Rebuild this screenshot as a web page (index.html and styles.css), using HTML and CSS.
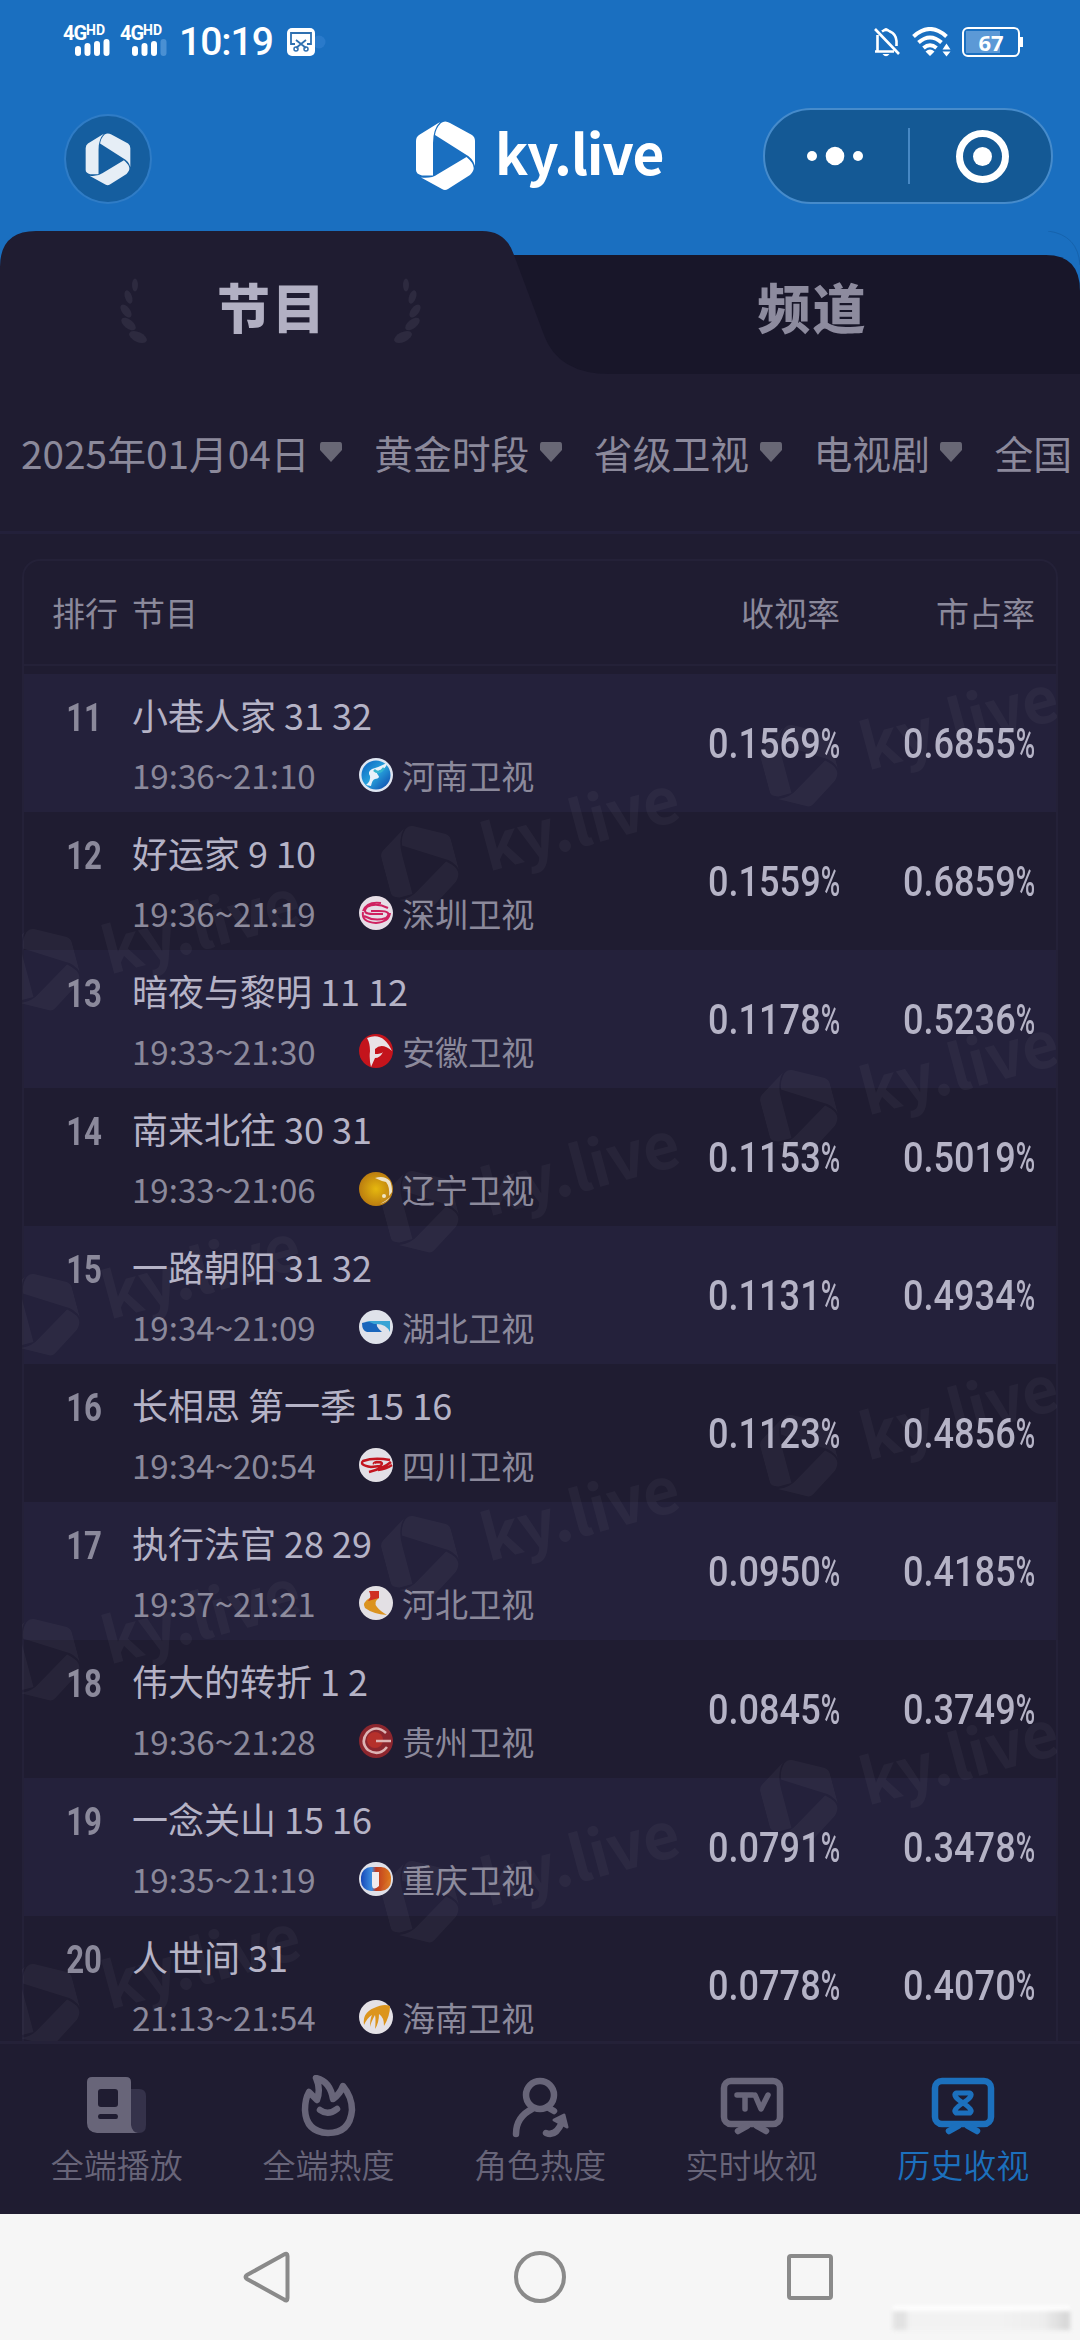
FILE: index.html
```html
<!DOCTYPE html>
<html lang="zh-CN">
<head>
    <meta charset="UTF-8">
    <meta name="viewport" content="width=device-width, initial-scale=1.0">
    <title>ky.live</title>
    <link rel="stylesheet" href="styles.css">
</head>
<body>
    <svg class="defs" width="0" height="0">
        <defs>
            <symbol id="logo" viewBox="0 0 59 70">
                <path d="M24 1 L3 14 Q0 16 0 20 V49 Q0 53 6 54.500 H17 V22 Q17 8 24 1Z"/>
                <path d="M25 2 Q29 -1 34 2 L56 14 Q59 16 59 20 V45 Q57 37 49 33 L19 14 Q20 7 25 2Z"/>
                <path d="M50.500 36 Q60 44 57 50 Q56 52 54 54 L32 68 Q29 70 26 68 L5 56.500 Q15 58 22 53Z"/>
            </symbol>
            <symbol id="laurel" viewBox="0 0 30 66">
                <ellipse cx="16" cy="7" rx="3" ry="6.500"/>
                <ellipse cx="9.500" cy="19" rx="3.500" ry="7" transform="rotate(-20 9.500 19)"/>
                <ellipse cx="7" cy="33" rx="4" ry="7.500" transform="rotate(-38 7 33)"/>
                <ellipse cx="9.500" cy="46" rx="4.500" ry="8.500" transform="rotate(-52 9.500 46)"/>
                <ellipse cx="19" cy="59" rx="5" ry="9.500" transform="rotate(-65 19 59)"/>
            </symbol>
            <symbol id="mark" viewBox="0 0 300 100" overflow="visible">
                <use href="#logo" x="-36" y="-43" width="72" height="86"/>
                <text x="64" y="22">ky.live</text>
            </symbol>
            <linearGradient id="blue" x1="0" x2="1" y1="0" y2="1">
                <stop offset="0" stop-color="#0b5fc0"/>
                <stop offset=".5" stop-color="#27a3dc"/>
                <stop offset="1" stop-color="#0a3fa8"/>
            </linearGradient>
            <radialGradient id="gold">
                <stop offset="0" stop-color="#e6b80e"/>
                <stop offset="1" stop-color="#bb7d10"/>
            </radialGradient>
            <linearGradient id="sunset" x1="0" x2="1">
                <stop offset="0" stop-color="#1748b8"/>
                <stop offset=".36" stop-color="#3d8fe0"/>
                <stop offset=".5" stop-color="#c03a22"/>
                <stop offset="1" stop-color="#dd7a1c"/>
            </linearGradient>
        </defs>
    </svg>

    <div class="top">
        <div class="statusbar">
            <div class="signal">
                <span class="net">4G<sup>HD</sup></span>
                <svg width="36" height="17"><path d="M3 10v4M12.500 7v7M22 5v9M31.500 3v11"/></svg>
            </div>
            <div class="signal">
                <span class="net">4G<sup>HD</sup></span>
                <svg width="36" height="17"><path d="M3 10v4M12.500 7v7M22 5v9"/><path class="weak" d="M31.500 3v11"/></svg>
            </div>
            <span class="time">10:19</span>
            <svg class="scissors" width="40" height="28" viewBox="0 0 40 28">
                <circle cx="32" cy="14" r="6.500" fill="#2a7aca"/>
                <rect width="28" height="28" rx="5" fill="#fff"/>
                <path d="M8 16H4V5h20v11h-4M9 12l10 8M19 12L9 20" fill="none" stroke="#2f70b0" stroke-width="1.800"/>
                <circle cx="9" cy="21" r="2" fill="none" stroke="#2f70b0" stroke-width="1.500"/>
                <circle cx="19" cy="21" r="2" fill="none" stroke="#2f70b0" stroke-width="1.500"/>
            </svg>
            <span class="spacer"></span>
            <svg class="bell" width="28" height="31" viewBox="0 0 28 31">
                <path d="M4.500 8v16M2 24.500h19M9 4.500Q13 1.500 17 4.500Q23 7 23.500 14v5M2 2l24 25" fill="none" stroke="#fff" stroke-width="2.600"/>
                <path d="M9.500 27h7q-3.500 4.500-7 0zM10 3q3-4 6 0z" fill="#fff"/>
            </svg>
            <svg class="wifi" width="40" height="30" viewBox="0 0 40 30">
                <path d="M1.500 9.500Q18-5.500 34.500 9.500M6.500 15.500Q18 5.500 29.500 15.500M11.500 21Q18 15.500 24.500 21" fill="none" stroke="#fff" stroke-width="4"/>
                <path d="M13.500 24.500q4.500-4 9 0L18 29zM30.500 22.500l4-6 4 6zM30.500 24.500h8l-4 5z" fill="#fff"/>
            </svg>
            <div class="battery"><span>67</span></div>
        </div>
        <div class="navbar">
            <div class="home"><svg width="46" height="53"><use href="#logo"/></svg></div>
            <div class="brand">
                <svg width="59" height="70"><use href="#logo"/></svg>
                <span>ky.live</span>
            </div>
            <div class="capsule">
                <svg width="144" height="92" viewBox="0 0 144 92">
                    <circle cx="47" cy="46" r="5"/><circle cx="70" cy="46" r="9.300"/><circle cx="93" cy="46" r="5"/>
                </svg>
                <svg class="target" width="144" height="92" viewBox="0 0 144 92">
                    <circle cx="73.500" cy="46.500" r="23" fill="none" stroke="#fff" stroke-width="7"/>
                    <circle cx="73.500" cy="46.500" r="9.500"/>
                </svg>
            </div>
        </div>
    </div>

    <div class="tabs">
        <svg class="tabs-bg" width="1080" height="143" viewBox="0 0 1080 143">
            <path d="M480 24H1046Q1080 24 1080 60V143H480Z" fill="#181629"/>
            <path d="M1048 0Q1078 4 1080 34" fill="none" stroke="#1663ad"/>
            <path d="M0 143V36Q0 0 36 0H482Q506 0 514 24L544 104Q558 143 610 143Z" fill="#1f1c31"/>
        </svg>
        <div class="tab active">
            <svg width="30" height="66"><use href="#laurel"/></svg>
            <span>节目</span>
            <svg class="flip" width="30" height="66"><use href="#laurel"/></svg>
        </div>
        <div class="tab"><span>频道</span></div>
    </div>

    <div class="filters">
        <div class="filter">2025年01月04日<svg width="22" height="20"><path d="M2 0H20Q22 0 22 3V8L11 20 0 8V3Q0 0 2 0Z"/></svg></div>
        <div class="filter">黄金时段<svg width="22" height="20"><path d="M2 0H20Q22 0 22 3V8L11 20 0 8V3Q0 0 2 0Z"/></svg></div>
        <div class="filter">省级卫视<svg width="22" height="20"><path d="M2 0H20Q22 0 22 3V8L11 20 0 8V3Q0 0 2 0Z"/></svg></div>
        <div class="filter">电视剧<svg width="22" height="20"><path d="M2 0H20Q22 0 22 3V8L11 20 0 8V3Q0 0 2 0Z"/></svg></div>
        <div class="filter">全国<svg width="22" height="20"><path d="M2 0H20Q22 0 22 3V8L11 20 0 8V3Q0 0 2 0Z"/></svg></div>
    </div>

    <div class="content">
        <div class="table">
            <div class="thead">
                <span class="rank">排行</span>
                <span class="program">节目</span>
                <span class="rate">收视率</span>
                <span class="share">市占率</span>
            </div>

            <div class="row">
                <span class="rank">11</span>
                <div class="program">
                    <div class="title">小巷人家 31 32</div>
                    <div class="meta"><span class="hours">19:36~21:10</span>
                        <svg width="34" height="34"><circle cx="17" cy="17" r="17" fill="#dfe6f2"/><circle cx="17" cy="17" r="14.500" fill="url(#blue)"/><path d="M7 27Q12 23 11 18Q8 14 13 11Q20 9 28 5Q27 11 21 12Q16 14 19 17Q22 20 16 21Q13 22 12 28Z" fill="#e8f2fa"/><path d="M15 12Q20 17 25 10" fill="none" stroke="#35b5cf" stroke-width="2.500"/></svg>河南卫视</div>
                </div>
                <span class="rate">0.1569<i>%</i></span>
                <span class="share">0.6855<i>%</i></span>
            </div>
            <div class="row">
                <span class="rank">12</span>
                <div class="program">
                    <div class="title">好运家 9 10</div>
                    <div class="meta"><span class="hours">19:36~21:19</span>
                        <svg width="34" height="34"><circle cx="17" cy="17" r="17" fill="#e6dde6"/><path d="M29 12Q17 6 8 11Q2 18 14 18H24M5 20Q16 26 27 22Q34 15 20 15H12M4 16Q2 26 17 27Q30 26 31 17M4 15Q8 5 22 7" fill="none" stroke="#cf2160" stroke-width="2"/></svg>深圳卫视</div>
                </div>
                <span class="rate">0.1559<i>%</i></span>
                <span class="share">0.6859<i>%</i></span>
            </div>
            <div class="row">
                <span class="rank">13</span>
                <div class="program">
                    <div class="title">暗夜与黎明 11 12</div>
                    <div class="meta"><span class="hours">19:33~21:30</span>
                        <svg width="34" height="34"><circle cx="17" cy="17" r="17" fill="#c4141c"/><path d="M8 4Q24-3 33 17Q23 8 16 15L16 20Q22 20 24 18Q21 24 16 24L12 33Q10 25 11 17Q11 9 8 4Z" fill="#e9e2e6"/></svg>安徽卫视</div>
                </div>
                <span class="rate">0.1178<i>%</i></span>
                <span class="share">0.5236<i>%</i></span>
            </div>
            <div class="row">
                <span class="rank">14</span>
                <div class="program">
                    <div class="title">南来北往 30 31</div>
                    <div class="meta"><span class="hours">19:33~21:06</span>
                        <svg width="34" height="34"><circle cx="17" cy="17" r="17" fill="url(#gold)"/><path d="M16 6Q25 3 31 9Q33 13 33 20L30 24Q31 15 27 10Q22 9 16 6Z" fill="#eee3c8"/><circle cx="25" cy="24" r="2" fill="#f0e5c4"/><path d="M21 32Q28 30 31 25Q27 29 21 32Z" fill="#f0e5c4"/></svg>辽宁卫视</div>
                </div>
                <span class="rate">0.1153<i>%</i></span>
                <span class="share">0.5019<i>%</i></span>
            </div>
            <div class="row">
                <span class="rank">15</span>
                <div class="program">
                    <div class="title">一路朝阳 31 32</div>
                    <div class="meta"><span class="hours">19:34~21:09</span>
                        <svg width="34" height="34"><circle cx="17" cy="17" r="17" fill="#dfe2ea"/><path d="M3 13Q11 10 19 13Q15 15 23 22H8Q3 21 3 13Z" fill="#1a66bc"/><path d="M6 11H31V22Q27 13 15 14Q9 11 6 11Z" fill="#39a4d5"/></svg>湖北卫视</div>
                </div>
                <span class="rate">0.1131<i>%</i></span>
                <span class="share">0.4934<i>%</i></span>
            </div>
            <div class="row">
                <span class="rank">16</span>
                <div class="program">
                    <div class="title">长相思 第一季 15 16</div>
                    <div class="meta"><span class="hours">19:34~20:54</span>
                        <svg width="34" height="34"><circle cx="17" cy="17" r="17" fill="#e2e0e6"/><path d="M31 12Q15 9 4 13Q0 17 12 19L21 18Q26 14 18 14Q14 15 15 16M32 14Q25 20 10 24M33 17Q27 21 19 22" fill="none" stroke="#c3151f" stroke-width="2.400"/></svg>四川卫视</div>
                </div>
                <span class="rate">0.1123<i>%</i></span>
                <span class="share">0.4856<i>%</i></span>
            </div>
            <div class="row">
                <span class="rank">17</span>
                <div class="program">
                    <div class="title">执行法官 28 29</div>
                    <div class="meta"><span class="hours">19:37~21:21</span>
                        <svg width="34" height="34"><circle cx="17" cy="17" r="17" fill="#e3e0e4"/><path d="M12 11L20 12Q14 16 18 21Q21 25 28 29Q14 28 6 22Q2 17 12 11Z" fill="#db9320"/><path d="M10 5H20V12L9 15Q13 11 10 5Z" fill="#cf3023"/></svg>河北卫视</div>
                </div>
                <span class="rate">0.0950<i>%</i></span>
                <span class="share">0.4185<i>%</i></span>
            </div>
            <div class="row">
                <span class="rank">18</span>
                <div class="program">
                    <div class="title">伟大的转折 1 2</div>
                    <div class="meta"><span class="hours">19:36~21:28</span>
                        <svg width="34" height="34"><circle cx="17" cy="17" r="17" fill="#8c262e"/><circle cx="16" cy="16" r="8" fill="#b5302b"/><path d="M27 9Q17 0 8 9Q1 18 9 26Q20 33 28 23M32 17H17" fill="none" stroke="#ddb4b4" stroke-width="2.600"/></svg>贵州卫视</div>
                </div>
                <span class="rate">0.0845<i>%</i></span>
                <span class="share">0.3749<i>%</i></span>
            </div>
            <div class="row">
                <span class="rank">19</span>
                <div class="program">
                    <div class="title">一念关山 15 16</div>
                    <div class="meta"><span class="hours">19:35~21:19</span>
                        <svg width="34" height="34"><circle cx="17" cy="17" r="17" fill="#dfe0e8"/><rect x="2" y="5" width="30" height="24" rx="10" fill="url(#sunset)"/><path d="M13 10H20V24Q13 30 13 22Z" fill="#f1ecee"/></svg>重庆卫视</div>
                </div>
                <span class="rate">0.0791<i>%</i></span>
                <span class="share">0.3478<i>%</i></span>
            </div>
            <div class="row">
                <span class="rank">20</span>
                <div class="program">
                    <div class="title">人世间 31</div>
                    <div class="meta"><span class="hours">21:13~21:54</span>
                        <svg width="34" height="34"><circle cx="17" cy="17" r="17" fill="#e4e1e6"/><path d="M5 25Q3 13 15 8Q25 3 31 6Q31 16 25 26Q25 17 20 14Q20 23 16 29Q17 20 16 15Q12 22 11 27Q11 19 13 15Q8 18 5 25Z" fill="#dc951d"/></svg>海南卫视</div>
                </div>
                <span class="rate">0.0778<i>%</i></span>
                <span class="share">0.4070<i>%</i></span>
            </div>

            <!-- repeated brand marks over the list -->
            <svg class="watermark" width="1035" height="1480" viewBox="22 561 1035 1480">
                <g transform="translate(800 766) rotate(-15)"><use href="#mark" width="300" height="100"/></g>
                <g transform="translate(800 1111) rotate(-15)"><use href="#mark" width="300" height="100"/></g>
                <g transform="translate(800 1456) rotate(-15)"><use href="#mark" width="300" height="100"/></g>
                <g transform="translate(800 1801) rotate(-15)"><use href="#mark" width="300" height="100"/></g>
                <g transform="translate(421 867) rotate(-15)"><use href="#mark" width="300" height="100"/></g>
                <g transform="translate(421 1212) rotate(-15)"><use href="#mark" width="300" height="100"/></g>
                <g transform="translate(421 1557) rotate(-15)"><use href="#mark" width="300" height="100"/></g>
                <g transform="translate(421 1902) rotate(-15)"><use href="#mark" width="300" height="100"/></g>
                <g transform="translate(42 970) rotate(-15)"><use href="#mark" width="300" height="100"/></g>
                <g transform="translate(42 1315) rotate(-15)"><use href="#mark" width="300" height="100"/></g>
                <g transform="translate(42 1660) rotate(-15)"><use href="#mark" width="300" height="100"/></g>
                <g transform="translate(42 2005) rotate(-15)"><use href="#mark" width="300" height="100"/></g>
            </svg>
        </div>
    </div>

    <div class="tabbar">
        <div class="item">
            <svg width="64" height="64" viewBox="0 0 64 64">
                <path d="M44 14h10q7 0 7 7v29q0 8-7 8H44z" fill="#35324a"/>
                <path fill-rule="evenodd" d="M7 2H41Q46 2 46 7V50Q47 57 53 58H12Q2 57 2 48V7Q2 2 7 2ZM16 14Q13 14 13 17V29Q13 32 16 32H30Q33 32 33 29V17Q33 14 30 14ZM15 39Q13 39 13 41.500T15 44H31Q33 44 33 41.500T31 39Z" fill="#686579"/>
            </svg>
            全端播放
        </div>
        <div class="item">
            <svg class="line" width="64" height="64" viewBox="0 0 64 64">
                <path d="M20 3Q34 6 37 24Q44 19 47 11Q56 22 56 35Q54 58 32 58Q10 57 9 35Q9 24 13 17L21 25Q25 14 20 3Z"/>
                <path d="M24 35Q32 41 41 34"/>
            </svg>
            全端热度
        </div>
        <div class="item">
            <svg class="line" width="64" height="64" viewBox="0 0 64 64">
                <circle cx="32" cy="20" r="14"/>
                <path d="M8 59Q8 42 24 34M39 32L46 36M38 58Q48 62 54 47"/>
                <path d="M46 45L56 40 59 52Z" fill="#686579" stroke-width="3"/>
            </svg>
            角色热度
        </div>
        <div class="item">
            <svg class="line" width="64" height="64" viewBox="0 0 64 64">
                <rect x="4" y="6" width="56" height="43" rx="7"/>
                <path d="M27 51L18 56M37 51L46 56"/>
                <path d="M17 20H33M25 21V34M35 20L41 34 48 20" stroke-width="5.500"/>
            </svg>
            实时收视
        </div>
        <div class="item active">
            <svg class="line" width="64" height="64" viewBox="0 0 64 64">
                <rect x="4" y="6" width="56" height="43" rx="7"/>
                <path d="M27 51L18 56M37 51L46 56"/>
                <path d="M25 18H39Q43 21 32 28Q21 21 25 18ZM25 38H39Q43 35 32 28Q21 35 25 38Z" stroke-width="5"/>
            </svg>
            历史收视
        </div>
    </div>

    <div class="sysnav">
        <svg width="60" height="60" viewBox="0 0 60 60"><path d="M34 6.500Q37.500 4.500 37.500 8V50Q37.500 54 34 51.500L-3 31Q-6 29 -3 27Z" transform="translate(10 0)"/></svg>
        <svg width="60" height="60" viewBox="0 0 60 60"><circle cx="30" cy="29" r="24"/></svg>
        <svg width="60" height="60" viewBox="0 0 60 60"><rect x="9" y="8" width="42" height="42" rx="2"/></svg>
        <div class="smudge"></div>
    </div>
</body>
</html>
```
FILE: styles.css
```css
* {
    box-sizing: border-box;
}
body {
    width: 1080px;
    height: 2340px;
    margin: 0;
    display: flex;
    flex-direction: column;
    overflow: hidden;
    background-color: #1f1c31;
    color: #8b899b;
    font-family: "Noto Sans CJK SC", "Noto Sans", sans-serif;
}
svg {
    display: block;
    flex: none;
}
.defs {
    position: absolute;
}

/* header */
.top {
    height: 231px;
    flex: none;
    background-color: #1a6fc0;
    color: #fff;
    fill: #fff;
}
.statusbar {
    height: 84px;
    display: flex;
    align-items: center;
    padding: 0 60px 0 63px;
}
.signal {
    width: 57px;
    height: 34px;
    margin-top: -3px;
}
.net {
    display: block;
    height: 15px;
    font: bold 20px/18px Roboto, sans-serif;
    letter-spacing: -1px;
    white-space: nowrap;
}
.net sup {
    display: inline-block;
    font-size: 14px;
    line-height: 10px;
    vertical-align: 5px;
    letter-spacing: 0;
}
.signal svg {
    margin-left: 12px;
    fill: none;
    stroke: #fff;
    stroke-width: 6px;
    stroke-linecap: round;
}
.signal .weak {
    stroke: #4a90d3;
}
.time {
    width: 110px;
    padding-left: 2px;
    font: 500 39px/44px Roboto, sans-serif;
    letter-spacing: -1px;
}
.spacer {
    flex: 1;
}
.bell {
    margin-right: 11px;
}
.wifi {
    margin-right: 10px;
}
.battery {
    position: relative;
    width: 58px;
    height: 30px;
    border: 2px solid #fff;
    border-radius: 6px;
    background: linear-gradient(#5c99d6, #5c99d6) 2px 2px / 34px 22px no-repeat;
    font: bold 22px/26px "Noto Sans", sans-serif;
    text-align: center;
}
.battery::after {
    content: "";
    position: absolute;
    right: -5px;
    top: 8px;
    width: 3px;
    height: 10px;
    background-color: #fff;
}
.navbar {
    height: 147px;
    display: flex;
    align-items: flex-start;
    justify-content: space-between;
    padding: 24px 27px 0 64px;
}
.home {
    width: 88px;
    height: 90px;
    margin-top: 6px;
    display: flex;
    align-items: center;
    justify-content: center;
    border: 2px solid #2f7cc6;
    border-radius: 50%;
    background-color: #155e9f;
    fill: #e6eef6;
}
.brand {
    width: 248px;
    height: 70px;
    margin: 13px 0 0 165px;
    display: flex;
    align-items: center;
}
.brand span {
    margin: -10px 0 0 20px;
    font-size: 55px;
    font-weight: bold;
    line-height: 70px;
    letter-spacing: -1.2px;
}
.capsule {
    width: 290px;
    height: 96px;
    display: flex;
    border: 2px solid #468bcb;
    border-radius: 48px;
    background: linear-gradient(#4788c4, #4788c4) 143px center / 2px 56px no-repeat #145995;
}

/* tabs */
.tabs {
    position: relative;
    height: 143px;
    flex: none;
    display: grid;
    grid-template-columns: 540px 540px;
    background-color: #1a6fc0;
}
.tabs-bg {
    position: absolute;
    left: 0;
    top: 0;
}
.tab {
    position: relative;
    display: flex;
    align-items: center;
    justify-content: center;
    padding: 6px 0 0 5px;
    color: #8d8b9e;
    font-size: 53px;
    font-weight: 900;
    line-height: 60px;
    letter-spacing: 2px;
    white-space: nowrap;
}
.tab.active {
    justify-content: flex-start;
    padding-left: 119px;
    color: #b2b0c3;
    fill: #2d2a3f;
}
.tab.active span {
    width: 110px;
    margin: 0 65px 0 68px;
}
.tab svg {
    margin-top: 10px;
}
.flip {
    transform: scaleX(-1);
}

/* filters */
.filters {
    height: 160px;
    flex: none;
    display: flex;
    align-items: center;
    gap: 32px;
    overflow: hidden;
    padding: 0 0 2px 21px;
    border-bottom: 3px solid #23203a;
    font-size: 38.8px;
    white-space: nowrap;
}
.filter {
    display: flex;
    align-items: center;
    gap: 10.5px;
    fill: #686775;
}
.filter svg {
    margin-top: 1px;
}

/* rating table */
.content {
    flex: 1;
    min-height: 0;
    overflow: hidden;
    padding: 25px 22px 0;
}
.table {
    position: relative;
    border: 2px solid #242138;
    border-bottom: 0;
    border-radius: 18px 18px 0 0;
}
.thead, .row {
    display: grid;
    grid-template-columns: 108px 1fr 160px 195px;
    padding-right: 21px;
}
.thead {
    height: 105px;
    align-items: center;
    padding-bottom: 1px;
    margin-bottom: 8px;
    border-bottom: 2px solid #242138;
    font-size: 33px;
}
.thead .rank {
    padding-left: 28px;
}
.rate, .share {
    text-align: right;
}
.row {
    height: 138px;
}
.row:nth-child(even) {
    background-color: #24213b;
}
.row .rank {
    width: 60px;
    padding-top: 21px;
    margin-left: 18px;
    font: bold 39px/46px Roboto, sans-serif;
    text-align: right;
    transform: scaleX(0.8);
    transform-origin: right;
}
.title {
    padding-top: 14px;
    color: #b5b3c6;
    font-size: 36px;
    line-height: 52px;
}
.meta {
    display: flex;
    align-items: center;
    height: 70px;
    font-size: 33.1px;
    line-height: 40px;
}
.hours {
    width: 227px;
}
.meta svg {
    margin-right: 9px;
}
.row .rate, .row .share {
    color: #b5b3c6;
    font: 500 43px/138px Roboto, sans-serif;
    white-space: nowrap;
    transform: scaleX(0.84);
    transform-origin: right;
}
.row i {
    display: inline-block;
    width: 23px;
    font-style: normal;
    transform: scaleX(0.73);
    transform-origin: left;
}
.watermark {
    position: absolute;
    left: -2px;
    top: 0;
    fill: #fff;
    opacity: 0.035;
    font-size: 63px;
    font-weight: bold;
    pointer-events: none;
}

/* bottom navigation */
.tabbar {
    height: 173px;
    flex: none;
    display: grid;
    grid-template-columns: repeat(5, 1fr);
    padding: 31px 11px 0;
    border-top: 3px solid #242138;
}
.item {
    display: flex;
    flex-direction: column;
    align-items: center;
    color: #686579;
    font-size: 33px;
    font-weight: 350;
    line-height: 50px;
}
.item.active {
    color: #1c70bd;
}
.line {
    fill: none;
    stroke: currentColor;
    stroke-width: 6.5px;
    stroke-linecap: round;
    stroke-linejoin: round;
}
.sysnav {
    position: relative;
    height: 126px;
    flex: none;
    display: flex;
    justify-content: space-between;
    padding: 34px 240px 0;
    background-color: #f6f6f6;
    fill: none;
    stroke: #8a8a8a;
    stroke-width: 4px;
}
.smudge {
    position: absolute;
    right: 10px;
    bottom: 10px;
    width: 177px;
    height: 24px;
    border-top: 5px solid #fff;
    background: linear-gradient(90deg, #e2e2e2 0 12px, #f2f2f2 16px 60%, #ededed 85%, #d4d4d4);
    filter: blur(2px);
}
```
